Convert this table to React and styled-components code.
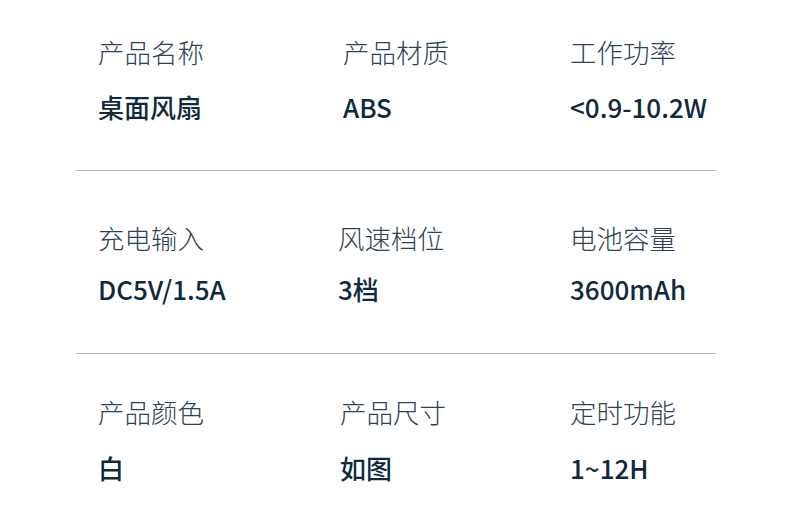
import React from "react";
import styled, { createGlobalStyle } from "styled-components";

const GlobalStyle = createGlobalStyle`
  body {
    margin: 0;
    background: #ffffff;
    font-family: "Noto Sans CJK SC", "Noto Sans", sans-serif;
  }
`;

const rows = [
  {
    top: 34,
    bottom: 45,
    gap: 19,
    cols: "245px 227px 1fr",
    items: [
      ["产品名称", "桌面风扇"],
      ["产品材质", "ABS"],
      ["工作功率", "<0.9-10.2W"],
    ],
  },
  {
    top: 49,
    bottom: 46,
    gap: 15,
    cols: "240px 232px 1fr",
    items: [
      ["充电输入", "DC5V/1.5A"],
      ["风速档位", "3档"],
      ["电池容量", "3600mAh"],
    ],
  },
  {
    top: 40,
    bottom: 40,
    gap: 20,
    cols: "242px 230px 1fr",
    items: [
      ["产品颜色", "白"],
      ["产品尺寸", "如图"],
      ["定时功能", "1~12H"],
    ],
  },
];

const Page = styled.div`
  width: 640px;
  margin-left: 76px;
`;

const Row = styled.section`
  display: grid;
  grid-template-columns: ${({ $cols }) => $cols};
  padding: ${({ $top }) => $top}px 0 ${({ $bottom }) => $bottom}px 22px;
  border-bottom: 1px solid ${({ $last }) => ($last ? "transparent" : "#b3b7bb")};
`;

const Cell = styled.div`
  display: flex;
  flex-direction: column;
  gap: ${({ $gap }) => $gap}px;
`;

const Label = styled.div`
  font-size: 26.5px;
  line-height: 36px;
  font-weight: 300;
  color: #2f4254;
  white-space: nowrap;
`;

const Value = styled.div`
  font-size: 26px;
  line-height: 36px;
  font-weight: 500;
  color: #0f2a40;
  white-space: nowrap;
`;

export default function App() {
  return (
    <>
      <GlobalStyle />
      <Page>
        {rows.map((row, i) => (
          <Row
            key={i}
            $cols={row.cols}
            $top={row.top}
            $bottom={row.bottom}
            $last={i === rows.length - 1}
          >
            {row.items.map(([label, value]) => (
              <Cell key={label} $gap={row.gap}>
                <Label>{label}</Label>
                <Value>{value}</Value>
              </Cell>
            ))}
          </Row>
        ))}
      </Page>
    </>
  );
}
